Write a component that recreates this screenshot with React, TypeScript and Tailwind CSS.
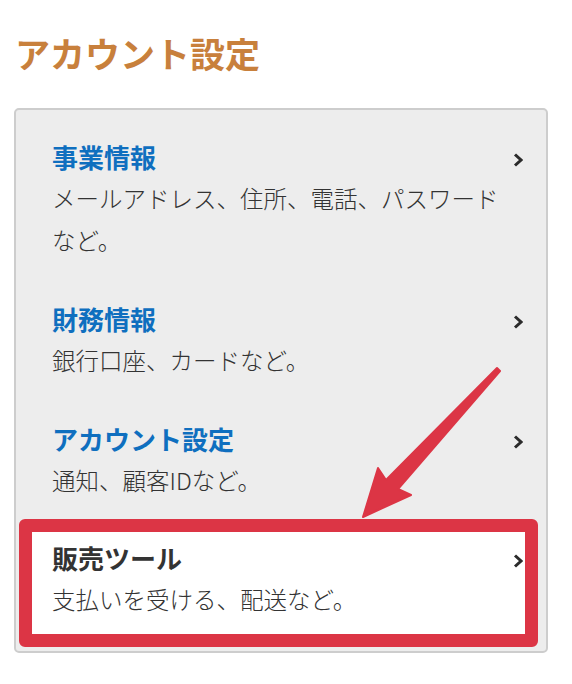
const font = { fontFamily: '"Noto Sans CJK JP", "Noto Sans", sans-serif' };

type Item = {
  title: string;
  desc: string;
};

const items: Item[] = [
  { title: "事業情報", desc: "メールアドレス、住所、電話、パスワードなど。" },
  { title: "財務情報", desc: "銀行口座、カードなど。" },
  { title: "アカウント設定", desc: "通知、顧客IDなど。" },
];

function Chevron() {
  return (
    <svg width="10" height="14" viewBox="0 0 10 14" className="mt-[16px] ml-[8px] shrink-0">
      <path d="M2 1.5 L8 7 L2 12.5" fill="none" stroke="#2b2b2b" strokeWidth="3" />
    </svg>
  );
}

function Row({ item, dark }: { item: Item; dark?: boolean }) {
  return (
    <div className="flex items-start">
      <div className="flex-1">
        <div
          className={
            "text-[26px] leading-[40px] font-bold " +
            (dark ? "text-[#333333]" : "text-[#0f6fbf]")
          }
        >
          {item.title}
        </div>
        <div className="text-[23.5px] leading-[42px] font-light text-[#333333]">{item.desc}</div>
      </div>
      <Chevron />
    </div>
  );
}

export default function App() {
  return (
    <div className="relative w-[572px] h-[684px] bg-white overflow-hidden" style={font}>
      <h1 className="pl-[15px] pt-[33px] text-[35px] leading-[40px] font-bold text-[#c8803c]">
        アカウント設定
      </h1>

      {/* settings card */}
      <div className="mt-[35px] ml-[14px] w-[534px] rounded-[5px] border-2 border-[#cdcdcd] bg-[#ededed] pt-[27px] pb-[4px]">
        <div className="flex flex-col gap-[38px] pl-[36px] pr-[23px]">
          {items.map((it) => (
            <Row key={it.title} item={it} />
          ))}
        </div>

        {/* highlighted item */}
        <div className="mt-[18px] ml-[3px] mr-[8px] rounded-[6px] border-[13px] border-[#dc3545] bg-white pt-[6px] pb-[14px] pl-[20px] pr-[2px]">
          <Row item={{ title: "販売ツール", desc: "支払いを受ける、配送など。" }} dark />
        </div>
      </div>

      {/* annotation arrow */}
      <svg
        className="absolute left-0 top-0 pointer-events-none"
        width="572"
        height="684"
        viewBox="0 0 572 684"
      >
        <polygon
          points="497,368 500,371 398,489 411,495 363,517 378,468 386,480"
          fill="#dc3545"
          stroke="#dc3545"
          strokeWidth="2"
          strokeLinejoin="round"
        />
      </svg>
    </div>
  );
}
